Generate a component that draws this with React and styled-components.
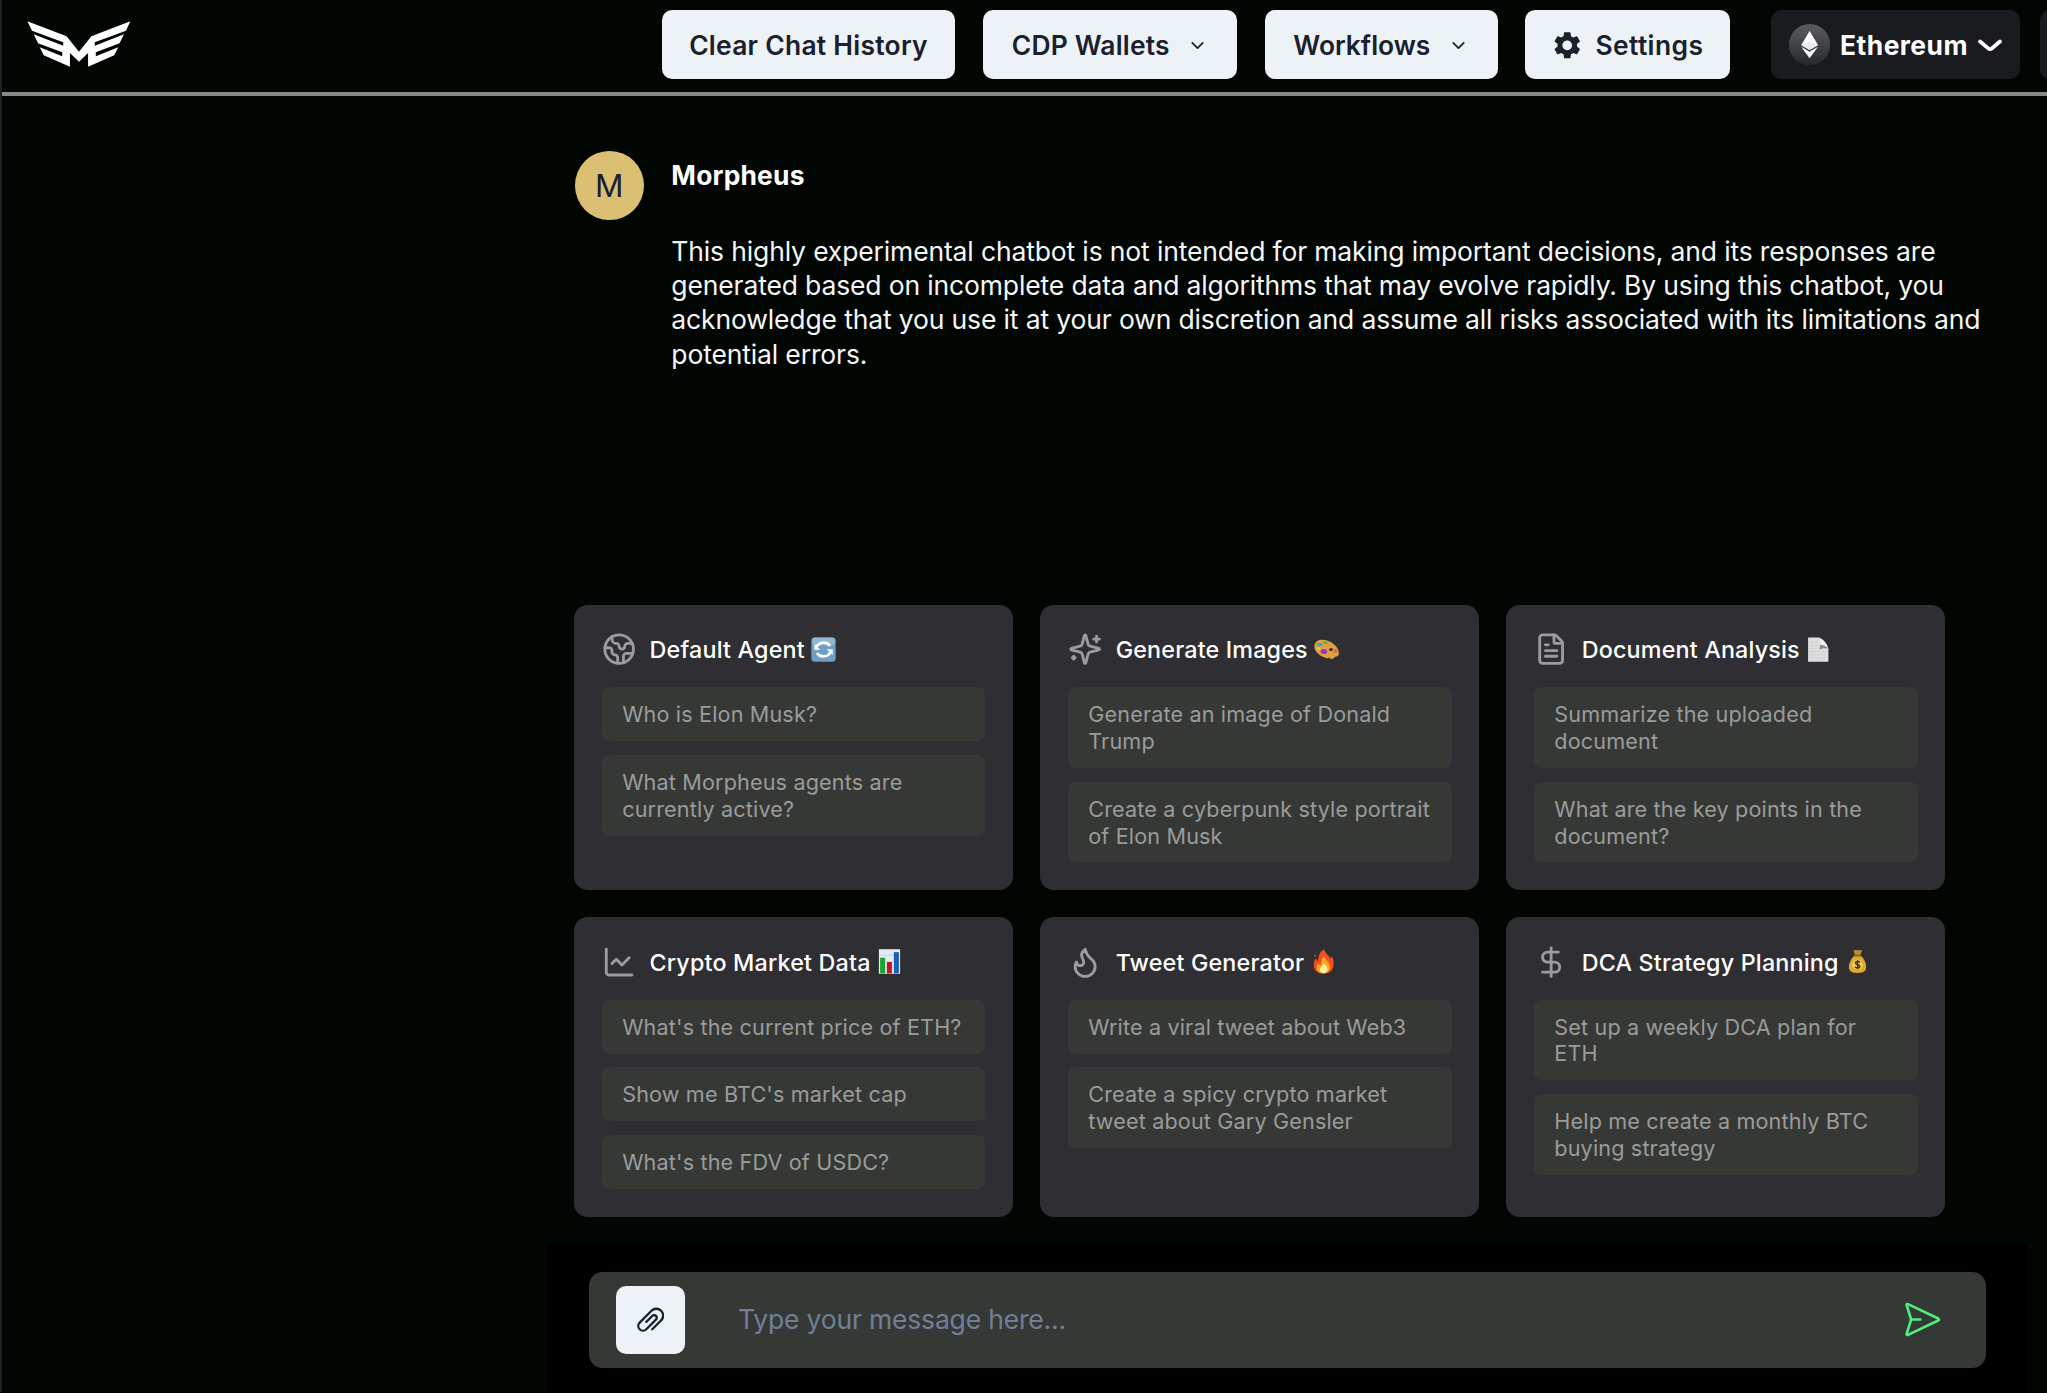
import React from "react";
import styled, { createGlobalStyle } from "styled-components";
import { Earth, FileText, ChartLine, Flame, DollarSign, ChevronDown } from "lucide-react";
import { MdSettings } from "react-icons/md";

const GlobalStyle = createGlobalStyle`
  html { font-size: 27.42px; }
  *, *::before, *::after { box-sizing: border-box; }
  body {
    margin: 0;
    background: #000;
    color: #fff;
    font-family: Inter, "Liberation Sans", sans-serif;
    overflow: hidden;
  }
  button, textarea, input { font: inherit; }
`;

const Page = styled.div`
  height: 1391.6px;
  width: 2047px;
  display: flex;
  flex-direction: column;
  background: #010603;
  border-left: 2px solid #1d211f;
  overflow: hidden;
`;

const Header = styled.header`
  flex: none;
  height: 96px;
  display: flex;
  justify-content: space-between;
  padding: 10px 0 0 25px;
  border-bottom: 4px solid #878885;
`;

const Logo = styled.svg`
  width: 104px;
  height: 46px;
  margin-top: 11px;
`;

const Actions = styled.nav`
  display: flex;
  width: 1385.4px;
  gap: 27.4px;
  overflow: hidden;
`;

const HeaderButton = styled.button`
  flex: none;
  width: ${(p) => p.$width}px;
  height: 2.5rem;
  padding: 1.6px 0 0;
  display: flex;
  align-items: center;
  justify-content: center;
  gap: ${(p) => p.$gap || 0}px;
  border: 0;
  border-radius: 10px;
  background: #edf2f7;
  color: #1a202c;
  font-size: 26.4px;
  font-weight: 600;
  letter-spacing: ${(p) => p.$spacing || 0}px;
  white-space: nowrap;
`;

const ChainButton = styled(HeaderButton)`
  margin-left: 14px;
  background: #1a1b1f;
  color: #fff;
  font-weight: 700;
`;

const AccountButton = styled(ChainButton)`
  margin-left: -7px;
`;

const Main = styled.main`
  flex: 1;
  min-height: 0;
  margin-left: 545px;
  width: 1480px;
  display: flex;
  flex-direction: column;
`;

const Message = styled.article`
  display: flex;
  gap: 27.8px;
  padding: 55px 28px 0 28px;
  height: 508.8px;
`;

const Avatar = styled.div`
  flex: none;
  width: 2.5rem;
  height: 2.5rem;
  display: flex;
  align-items: center;
  justify-content: center;
  border-radius: 50%;
  background: #dbbf73;
  color: #1a202c;
  font-size: 31.5px;
`;

const MessageBody = styled.div`
  padding-top: 7.2px;
  line-height: 34.28px;
`;

const Author = styled.div`
  font-size: 26.4px;
  font-weight: 700;
  letter-spacing: 0.2px;
  margin-bottom: 41.2px;
`;

const MessageText = styled.p`
  margin: 0;
  width: 1318px;
  color: #f6f7f6;
  font-size: 26.5px;
  letter-spacing: -0.145px;
`;

const CardGrid = styled.section`
  display: grid;
  grid-template-columns: repeat(3, 438.7px);
  gap: 27.4px;
  padding-left: 27.2px;
`;

const Card = styled.div`
  padding: 1rem;
  border-radius: 13.7px;
  background: #2e2e33;
`;

const CardHeader = styled.div`
  display: flex;
  align-items: center;
  height: 34.28px;
  margin-bottom: 20.6px;
  color: #9c9c9f;

  > svg { flex: none; width: 34.28px; height: 34.28px; }
`;

const CardTitle = styled.h3`
  margin: 0 6.6px 0 13.7px;
  padding-top: 1px;
  color: #fff;
  font-size: 23.3px;
  font-weight: 500;
  letter-spacing: 0.18px;
  white-space: nowrap;
`;

const Emoji = styled.svg`
  && { width: 25px; height: 25px; }
`;

const PromptList = styled.div`
  display: flex;
  flex-direction: column;
  gap: 13.7px;
`;

const Prompt = styled.button`
  padding: 14.2px 18px 13.2px 20.57px;
  border: 0;
  border-radius: 6.9px;
  background: #353835;
  color: #9a9c9a;
  text-align: left;
  font-size: 21.6px;
  letter-spacing: 0.155px;
  line-height: 26.74px;
`;

const Composer = styled.footer`
  margin-top: auto;
  height: 147.6px;
  padding: 27.7px 41.2px 0 42px;
  background: #000;
`;

const InputBar = styled.div`
  height: 96.2px;
  display: flex;
  align-items: center;
  padding: 0 42.5px 0 27.4px;
  border-radius: 13.7px;
  background: #353936;
`;

const AttachButton = styled.button`
  flex: none;
  width: 2.5rem;
  height: 2.5rem;
  padding: 0;
  display: flex;
  align-items: center;
  justify-content: center;
  border: 0;
  border-radius: 10px;
  background: #edf2f7;
  color: #1a202c;
`;

const Placeholder = styled.div`
  flex: 1;
  padding: 0 0 2px 53px;
  color: #718096;
  font-size: 26.5px;
  letter-spacing: -0.18px;
`;

const LogoMark = () => (
  <Logo viewBox="82 64 310 138" preserveAspectRatio="none" fill="#fff">
    <path d="M83 65L200 110L237 156L274 110L390 65L377 93L284 128V138L371 104L358 131L287 158V170L354 143L342 167L264 201V160L237 186L210 160V201L132 167L120 143L187 170V158L115 131L102 104L190 138V128L97 93Z" />
  </Logo>
);

const MenuChevron = () => <ChevronDown size={21} strokeWidth={2} />;

const EthIcon = () => (
  <svg width="41.2" height="41.2" viewBox="0 0 28 28">
    <defs>
      <linearGradient id="ethDisc" x1="0" y1="0" x2="0" y2="1">
        <stop offset="0" stopColor="#5c5d61" />
        <stop offset="1" stopColor="#25292e" />
      </linearGradient>
    </defs>
    <circle cx="14" cy="14" r="14" fill="url(#ethDisc)" />
    <path d="M14 4.8L8.3 14.3L14 17.7L19.7 14.3Z" fill="#fff" />
    <path d="M8.3 15.4L14 23.2L19.7 15.4L14 18.8Z" fill="#fff" />
    <path d="M14 11.7L8.3 14.3L14 17.7L19.7 14.3Z" fill="#ececee" />
  </svg>
);

const ChainChevron = () => (
  <svg width="24" height="13" viewBox="0 0 14 7" fill="none">
    <path d="M1.2 1.2L6 5.2Q7 6 8 5.2L12.8 1.2" stroke="#fff" strokeWidth="2.2" strokeLinecap="round" />
  </svg>
);

const SparklesIcon = () => (
  <svg viewBox="0 0 24 24" fill="none" stroke="currentColor" strokeWidth="2" strokeLinecap="round" strokeLinejoin="round">
    <path d="M9.937 15.5A2 2 0 0 0 8.5 14.063l-6.135-1.582a.5.5 0 0 1 0-.962L8.5 9.936A2 2 0 0 0 9.937 8.5l1.582-6.135a.5.5 0 0 1 .963 0L14.063 8.5A2 2 0 0 0 15.5 9.937l6.135 1.581a.5.5 0 0 1 0 .964L15.5 14.063a2 2 0 0 0-1.437 1.437l-1.582 6.135a.5.5 0 0 1-.963 0z" />
    <path d="M20 3v4M22 5h-4M4 17v2M5 18H3" />
  </svg>
);

const AttachmentIcon = () => (
  <svg width="27.4" height="27.4" viewBox="0 0 24 24" fill="currentColor">
    <path d="M21.843,3.455a6.961,6.961,0,0,0-9.846,0L1.619,13.832a5.128,5.128,0,0,0,7.252,7.252L17.3,12.653A3.293,3.293,0,1,0,12.646,8L7.457,13.184A1,1,0,1,0,8.871,14.6L14.06,9.409a1.294,1.294,0,0,1,1.829,1.83L7.457,19.67a3.128,3.128,0,0,1-4.424-4.424L13.411,4.869a4.962,4.962,0,1,1,7.018,7.018L12.646,19.67a1,1,0,1,0,1.414,1.414L21.843,13.3a6.96,6.96,0,0,0,0-9.846Z" />
  </svg>
);

const SendIcon = () => (
  <svg width="41" height="41" viewBox="0 0 41 41" fill="none" stroke="#4fee80" strokeWidth="2.6" strokeLinecap="round" strokeLinejoin="round">
    <path d="M9.2 20.5L4.6 6.2Q4.4 4.6 6 5.1L36.2 19.5Q37.8 20.5 36.2 21.5L6 35.9Q4.4 36.400 4.6 34.8ZH18.5" />
  </svg>
);

const RefreshEmoji = () => (
  <Emoji viewBox="0 0 24 24">
    <rect x=".3" y=".3" width="23.4" height="23.4" rx="3.4" fill="#6f9fc6" />
    <rect x="1.3" y=".8" width="21.4" height="7" rx="3" fill="#a9c9e2" opacity=".6" />
    <path d="M5.200 10A7.2 6.5 0 0 1 18.300 8.700M18.800 14A7.2 6.5 0 0 1 5.700 15.300" fill="none" stroke="#fff" strokeWidth="2.5" />
    <path d="M3.200 6.800V12.200H9ZM20.800 17.200V11.800H15Z" fill="#fff" />
  </Emoji>
);

const PaletteEmoji = () => (
  <Emoji viewBox="0 0 24 24">
    <path d="M.4 8.4C1 3 6.600 1.600 12 3.200C18.500 5.200 24.300 10.500 23.800 16C23.400 19.500 20.800 18.200 20 19.300C19.300 20.600 17.500 22 15.600 20.600C14.500 19.600 13.500 19.800 12.800 20.500C7 19.500-.3 14.500.4 8.400Z" fill="#dfa13d" />
    <ellipse cx="16.300" cy="12" rx="1.900" ry="1.500" fill="#3b2a20" />
    <ellipse cx="11" cy="5.300" rx="2.400" ry="1.500" fill="#5fb548" />
    <ellipse cx="5.600" cy="7.300" rx="2.800" ry="1.900" fill="#39a9c9" />
    <ellipse cx="9.500" cy="14" rx="3.200" ry="2.400" fill="#9a35c4" />
    <ellipse cx="20.600" cy="13.500" rx="1.800" ry="1.900" fill="#e0664f" />
    <ellipse cx="4.300" cy="11.300" rx="1.600" ry="1.400" fill="#e8c93e" />
  </Emoji>
);

const PageEmoji = () => (
  <Emoji viewBox="0 0 24 24">
    <path d="M2 .5H12.500L21.500 11V23.800H2Z" fill="#dedede" />
    <path d="M12.500 .5C14 4 14 8 12.800 12.200C16 10.500 19 10.500 21.500 11Z" fill="#8b8b8b" />
    <path d="M12.500 .5C17 2.500 20 6 21.500 11C19 8.500 16.500 7.500 14 7.800Z" fill="#f4f4f4" />
    <path d="M4 5H11M4 8H11M4 11H11M4 14H19M4 17H19M4 20H19" stroke="#c9c9c9" strokeWidth=".7" />
  </Emoji>
);

const BarsEmoji = () => (
  <Emoji viewBox="0 0 24 24">
    <rect x="1.800" y=".2" width="20.400" height="23.600" fill="#e4ebf5" />
    <path d="M2 6H22M2 12H22M2 18H22" stroke="#c3cfe0" strokeWidth=".7" />
    <rect x="3" y="8.400" width="4.800" height="15" fill="#17a633" />
    <rect x="9.500" y="12.500" width="4.800" height="10.900" fill="#c3161c" />
    <rect x="16.200" y="3" width="4.800" height="20.400" fill="#1c5fb8" />
  </Emoji>
);

const FireEmoji = () => (
  <Emoji viewBox="0 0 24 24">
    <path d="M12.500 .3C13.500 4 18 7 19 9.500C19.600 8.500 19.500 7.500 19.300 6.500C22 9.500 22.200 14 21.300 17.500C20.200 21.500 16.500 23.700 12 23.700C7 23.700 3.200 21 2.700 16.500C2.300 13 3.600 10.500 5 8.700C5.200 10.500 5.800 11.300 6.800 12C6.600 7.500 8.500 2.500 12.500 .3Z" fill="#f2501f" />
    <path d="M12.800 7C13.300 10 17.200 12.500 18 15.500C19.300 20 16.300 23.300 12 23.300C7.600 23.300 5 20.500 5.600 16.500C6 15 6.500 14.300 7 13.600C7.600 15 8.500 15.500 9.500 15.300C9.500 12 10.500 9 12.800 7Z" fill="#fda522" />
    <path d="M12.300 14C14 15.800 15.800 17 15.800 19.500C15.800 22 14 23 12 23C10 23 8.300 21.800 8.400 19.500C8.500 17.500 11 16.500 12.300 14Z" fill="#fff3a0" />
    <circle cx="4" cy="6.500" r="1" fill="#d4442a" />
  </Emoji>
);

const MoneyBagEmoji = () => (
  <Emoji viewBox="0 0 24 24">
    <path d="M8.200 1.500C10 .2 11 2 12 1C13.500 2 14.500 .2 16.300 1.500L14.800 6H9.400Z" fill="#b98a2e" />
    <path d="M9 6.500H15.200C18 9 20.300 13 20.300 17.300C20.300 21.500 17.500 23 12 23C6.500 23 3.800 21.500 3.800 17.300C3.800 13 6.200 9 9 6.500Z" fill="#dcab2e" />
    <rect x="8.400" y="5.400" width="7.400" height="1.900" rx=".9" fill="#8a5f1d" />
    <circle cx="12" cy="15" r="5" fill="#f0cd5b" />
    <path d="M14.300 12.900C13.800 11.800 10 11.400 9.900 13.500C9.900 15.500 14.400 14.600 14.300 16.800C14.200 18.800 10 18.400 9.600 17M12.100 10.500V19.500" fill="none" stroke="#4a3312" strokeWidth="1.400" />
  </Emoji>
);

const agents = [
  { title: "Default Agent", icon: Earth, emoji: RefreshEmoji, prompts: ["Who is Elon Musk?", "What Morpheus agents are currently active?"] },
  { title: "Generate Images", icon: SparklesIcon, emoji: PaletteEmoji, prompts: ["Generate an image of Donald Trump", "Create a cyberpunk style portrait of Elon Musk"] },
  { title: "Document Analysis", icon: FileText, emoji: PageEmoji, prompts: ["Summarize the uploaded document", "What are the key points in the document?"] },
  { title: "Crypto Market Data", icon: ChartLine, emoji: BarsEmoji, prompts: ["What's the current price of ETH?", "Show me BTC's market cap", "What's the FDV of USDC?"] },
  { title: "Tweet Generator", icon: Flame, emoji: FireEmoji, prompts: ["Write a viral tweet about Web3", "Create a spicy crypto market tweet about Gary Gensler"] },
  { title: "DCA Strategy Planning", icon: DollarSign, emoji: MoneyBagEmoji, prompts: ["Set up a weekly DCA plan for ETH", "Help me create a monthly BTC buying strategy"] },
];

export default function App() {
  return (
    <>
      <GlobalStyle />
      <Page>
        <Header>
          <LogoMark />
          <Actions>
            <HeaderButton $width={293.8} $spacing={0.27}>Clear Chat History</HeaderButton>
            <HeaderButton $width={254.4} $gap={17.5} $spacing={0.2}>CDP Wallets<MenuChevron /></HeaderButton>
            <HeaderButton $width={233} $gap={17.5}>Workflows<MenuChevron /></HeaderButton>
            <HeaderButton $width={204.8} $gap={11.5} $spacing={0.4}><MdSettings size={32.5} />Settings</HeaderButton>
            <ChainButton $width={248.6} $gap={10} $spacing={0.45}><EthIcon />Ethereum<ChainChevron /></ChainButton>
            <AccountButton $width={200} />
          </Actions>
        </Header>
        <Main>
          <Message>
            <Avatar>M</Avatar>
            <MessageBody>
              <Author>Morpheus</Author>
              <MessageText>
                This highly experimental chatbot is not intended for making important decisions, and its responses are generated based on incomplete data and algorithms that may evolve rapidly. By using this chatbot, you acknowledge that you use it at your own discretion and assume all risks associated with its limitations and potential errors.
              </MessageText>
            </MessageBody>
          </Message>
          <CardGrid>
            {agents.map(({ title, icon: Icon, emoji: Mark, prompts }) => (
              <Card key={title}>
                <CardHeader>
                  <Icon />
                  <CardTitle>{title}</CardTitle>
                  <Mark />
                </CardHeader>
                <PromptList>
                  {prompts.map((text) => <Prompt key={text}>{text}</Prompt>)}
                </PromptList>
              </Card>
            ))}
          </CardGrid>
          <Composer>
            <InputBar>
              <AttachButton aria-label="Attach file"><AttachmentIcon /></AttachButton>
              <Placeholder>Type your message here...</Placeholder>
              <SendIcon />
            </InputBar>
          </Composer>
        </Main>
      </Page>
    </>
  );
}
